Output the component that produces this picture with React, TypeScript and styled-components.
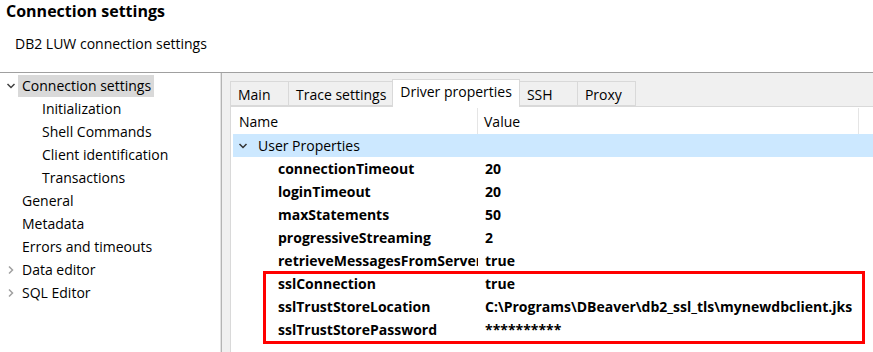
import styled, { createGlobalStyle } from "styled-components";

const GlobalStyle = createGlobalStyle`
  html, body {
    margin: 0;
    padding: 0;
    background: #ffffff;
  }
  body {
    font-family: "Open Sans", "Noto Sans", "Liberation Sans", sans-serif;
    color: #000000;
  }
`;

type TreeItem = {
  label: string;
  level: number;
  expander?: "open" | "closed";
  selected?: boolean;
};

const treeItems: TreeItem[] = [
  { label: "Connection settings", level: 0, expander: "open", selected: true },
  { label: "Initialization", level: 1 },
  { label: "Shell Commands", level: 1 },
  { label: "Client identification", level: 1 },
  { label: "Transactions", level: 1 },
  { label: "General", level: 0 },
  { label: "Metadata", level: 0 },
  { label: "Errors and timeouts", level: 0 },
  { label: "Data editor", level: 0, expander: "closed" },
  { label: "SQL Editor", level: 0, expander: "closed" },
];

const tabs = ["Main", "Trace settings", "Driver properties", "SSH", "Proxy"];
const activeTab = "Driver properties";

const props: [string, string][] = [
  ["connectionTimeout", "20"],
  ["loginTimeout", "20"],
  ["maxStatements", "50"],
  ["progressiveStreaming", "2"],
  ["retrieveMessagesFromServerOnGetMessage", "true"],
];

const sslProps: [string, string][] = [
  ["sslConnection", "true"],
  ["sslTrustStoreLocation", "C:\\Programs\\DBeaver\\db2_ssl_tls\\mynewdbclient.jks"],
  ["sslTrustStorePassword", "**********"],
];

const ChevronDown = ({ color = "#404040" }: { color?: string }) => (
  <svg width="10" height="10" viewBox="0 0 10 10">
    <polyline points="1.5,3 5,6.5 8.5,3" fill="none" stroke={color} strokeWidth="1.5" />
  </svg>
);

const ChevronRight = ({ color = "#a0a0a0" }: { color?: string }) => (
  <svg width="10" height="10" viewBox="0 0 10 10">
    <polyline points="3,1.5 6.5,5 3,8.5" fill="none" stroke={color} strokeWidth="1.5" />
  </svg>
);

export default function App() {
  return (
    <>
      <GlobalStyle />
      <Page>
        <Header>
          <Title>Connection settings</Title>
          <Subtitle>DB2 LUW connection settings</Subtitle>
        </Header>
        <Main>
          <Sidebar>
            {treeItems.map((item) => (
              <TreeRow key={item.label} $level={item.level}>
                <Expander>
                  {item.expander === "open" && <ChevronDown />}
                  {item.expander === "closed" && <ChevronRight />}
                </Expander>
                <TreeLabel $selected={!!item.selected}>{item.label}</TreeLabel>
              </TreeRow>
            ))}
          </Sidebar>
          <Content>
            <TabStrip>
              {tabs.map((t) => (
                <Tab key={t} $active={t === activeTab}>
                  {t}
                </Tab>
              ))}
            </TabStrip>
            <TabPanel>
              <Table>
                <HeaderRow>
                  <HeaderCell $width={245}>Name</HeaderCell>
                  <HeaderCell $width={381}>Value</HeaderCell>
                  <HeaderCell $width={40} />
                </HeaderRow>
                <GroupRow>
                  <GroupChevron>
                    <ChevronDown color="#333333" />
                  </GroupChevron>
                  User Properties
                </GroupRow>
                {props.map(([k, v]) => (
                  <PropRow key={k}>
                    <PropName>{k}</PropName>
                    <PropValue>{v}</PropValue>
                  </PropRow>
                ))}
                <Highlight>
                  {sslProps.map(([k, v]) => (
                    <PropRow key={k}>
                      <PropName>{k}</PropName>
                      <PropValue>{v}</PropValue>
                    </PropRow>
                  ))}
                </Highlight>
              </Table>
            </TabPanel>
          </Content>
        </Main>
      </Page>
    </>
  );
}

const Page = styled.div`
  width: 873px;
  height: 352px;
  overflow: hidden;
  display: flex;
  flex-direction: column;
  background: #ffffff;
`;

const Header = styled.div`
  height: 73px;
  flex: none;
  box-sizing: border-box;
  border-bottom: 1px solid #a0a0a0;
  padding: 0 0 0 6px;
`;

const Title = styled.div`
  font-size: 16px;
  font-weight: 700;
  line-height: 22px;
`;

const Subtitle = styled.div`
  font-size: 14px;
  line-height: 20px;
  margin-top: 12px;
  padding-left: 9px;
`;

const Main = styled.div`
  flex: 1;
  display: flex;
  min-height: 0;
`;

const Sidebar = styled.div`
  width: 221px;
  flex: none;
  background: #ffffff;
  border-right: 1px solid #e3e3e3;
  padding-top: 2px;
  box-sizing: border-box;
`;

const TreeRow = styled.div<{ $level: number }>`
  display: flex;
  align-items: center;
  height: 23px;
  padding-left: ${({ $level }) => 4 + $level * 20}px;
  &:first-child {
    height: 22px;
  }
`;

const Expander = styled.span`
  width: 14px;
  height: 10px;
  display: flex;
  align-items: center;
  justify-content: center;
  flex: none;
`;

const TreeLabel = styled.span<{ $selected: boolean }>`
  font-size: 14px;
  line-height: 22px;
  padding: 0 3px 0 4px;
  background: ${({ $selected }) => ($selected ? "#d9d9d9" : "transparent")};
  white-space: nowrap;
`;

const Content = styled.div`
  flex: 1;
  min-width: 0;
  background: #f0f0f0;
  border-left: 1px solid #b4b4b4;
  padding: 6px 0 0 8px;
  overflow: hidden;
`;

const TabStrip = styled.div`
  display: flex;
  align-items: flex-end;
  height: 27px;
  padding-left: 1px;
  position: relative;
  z-index: 1;
`;

const Tab = styled.div<{ $active: boolean }>`
  box-sizing: border-box;
  min-width: 59px;
  height: ${({ $active }) => ($active ? 28 : 25)}px;
  margin-bottom: ${({ $active }) => ($active ? -1 : 0)}px;
  padding: ${({ $active }) => ($active ? "2px 7px 0 7px" : "3px 6px 0 7px")};
  font-size: 14px;
  line-height: 20px;
  white-space: nowrap;
  border: 1px solid #d9d9d9;
  border-bottom: ${({ $active }) => ($active ? "none" : "1px solid #d9d9d9")};
  margin-left: -1px;
  background: ${({ $active }) => ($active ? "#ffffff" : "#f0f0f0")};
`;

const TabPanel = styled.div`
  background: #ffffff;
  border: 1px solid #d9d9d9;
  border-right: none;
  height: 260px;
  padding: 0 0 0 2px;
`;

const Table = styled.div`
  display: flex;
  flex-direction: column;
`;

const HeaderRow = styled.div`
  display: flex;
  height: 27px;
  align-items: stretch;
`;

const HeaderCell = styled.div<{ $width: number }>`
  width: ${({ $width }) => $width}px;
  flex: none;
  box-sizing: border-box;
  padding: 3px 0 0 6px;
  font-size: 14px;
  line-height: 22px;
  border-right: 1px solid #e5e5e5;
  margin-top: 1px;
`;

const GroupRow = styled.div`
  display: flex;
  align-items: center;
  height: 23px;
  background: #cce8ff;
  font-size: 14px;
  padding-left: 5px;
  white-space: nowrap;
`;

const GroupChevron = styled.span`
  width: 14px;
  display: flex;
  align-items: center;
  margin-right: 6px;
`;

const PropRow = styled.div`
  display: flex;
  align-items: center;
  height: 23px;
  font-size: 14px;
  font-weight: 700;
  white-space: nowrap;
`;

const PropName = styled.span`
  width: 245px;
  flex: none;
  box-sizing: border-box;
  padding-left: 45px;
  overflow: hidden;
`;

const PropValue = styled.span`
  padding-left: 7px;
`;

const Highlight = styled.div`
  position: relative;
  &::after {
    content: "";
    position: absolute;
    left: 30px;
    top: -1px;
    width: 602px;
    height: 73px;
    box-sizing: border-box;
    border: 3px solid #ff0000;
    pointer-events: none;
  }
`;
